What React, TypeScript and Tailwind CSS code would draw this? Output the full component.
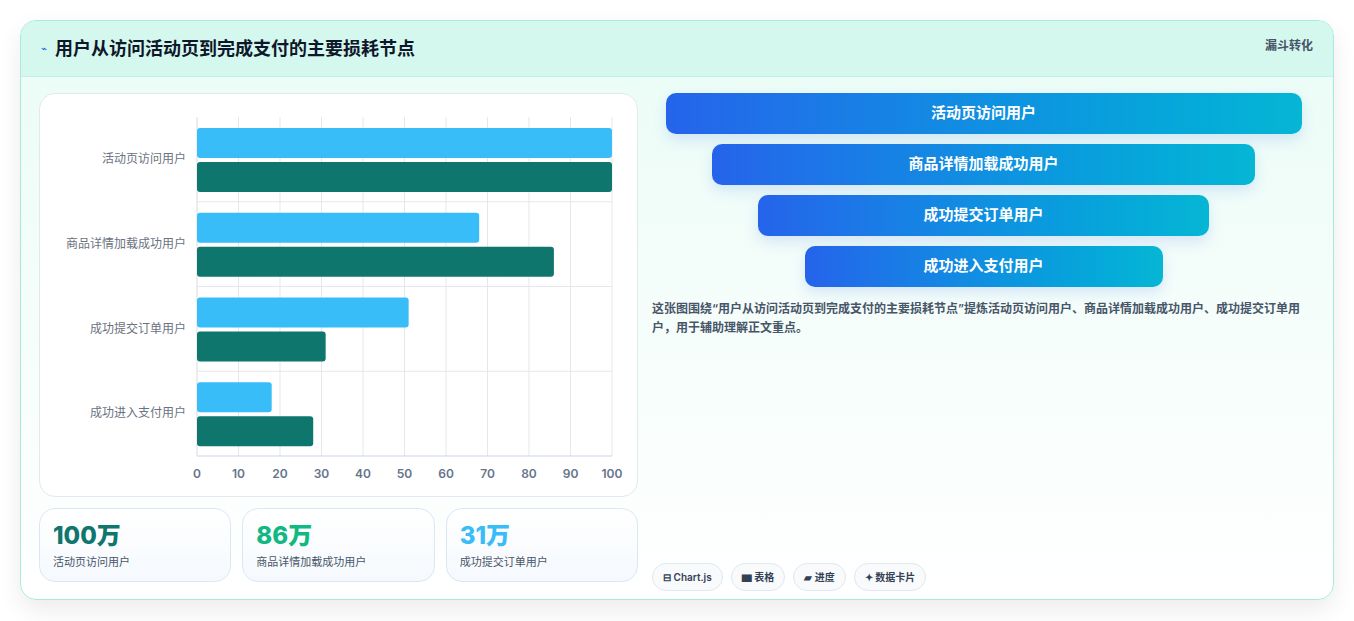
const font = { fontFamily: 'Inter, "Noto Sans CJK SC", sans-serif' }

const cats = [
  { label: '活动页访问用户', a: 100, b: 100 },
  { label: '商品详情加载成功用户', a: 68, b: 86 },
  { label: '成功提交订单用户', a: 51, b: 31 },
  { label: '成功进入支付用户', a: 18, b: 28 },
]

const funnel = ['活动页访问用户', '商品详情加载成功用户', '成功提交订单用户', '成功进入支付用户']
const funnelW = ['w-[636px]', 'w-[543px]', 'w-[451px]', 'w-[358px]']

const stats = [
  { v: '100万', l: '活动页访问用户', c: 'text-[#0f766e]' },
  { v: '86万', l: '商品详情加载成功用户', c: 'text-[#10b981]' },
  { v: '31万', l: '成功提交订单用户', c: 'text-[#38bdf8]' },
]

function Chart() {
  const x0 = 157, w = 415, y0 = 23, band = 84.75
  const sx = (v: number) => (v / 100) * w
  return (
    <svg width="597" height="402" className="block">
      {Array.from({ length: 11 }).map((_, i) => (
        <line key={i} x1={x0 + i * 41.5} x2={x0 + i * 41.5} y1={y0} y2={362} stroke="#e5e7eb" />
      ))}
      {[1, 2, 3].map(i => (
        <line key={i} x1={x0} x2={x0 + w} y1={y0 + i * band} y2={y0 + i * band} stroke="#e5e7eb" />
      ))}
      <line x1={x0} x2={x0 + w} y1={362} y2={362} stroke="#cbd5e1" />
      <line x1={x0} x2={x0} y1={y0} y2={362} stroke="#e5e7eb" />
      {cats.map((c, i) => {
        const t = y0 + i * band
        return (
          <g key={c.label}>
            <rect x={x0} y={t + 11} width={sx(c.a)} height={30} rx={3} fill="#38bdf8" />
            <rect x={x0} y={t + 45} width={sx(c.b)} height={30} rx={3} fill="#0f766e" />
            <text x={146} y={t + 46} textAnchor="end" fontSize="12" fill="#6b7280" style={font}>{c.label}</text>
          </g>
        )
      })}
      {Array.from({ length: 11 }).map((_, i) => (
        <text key={i} x={x0 + i * 41.5} y={384} textAnchor="middle" fontSize="12" fontWeight="600" fill="#64748b" style={font}>{i * 10}</text>
      ))}
    </svg>
  )
}

export default function App() {
  return (
    <div className="w-[1354px] h-[621px] bg-white pt-5 pl-5" style={font}>
      <div className="w-[1314px] h-[580px] rounded-2xl border border-[#a7ebe0] overflow-hidden shadow-[0_10px_25px_rgba(0,0,0,0.08)] bg-gradient-to-b from-[#eafcf6] to-white flex flex-col">
        <div className="h-[56px] shrink-0 bg-[#d5f8ee] border-b border-[#c7efe4] flex items-center justify-between px-5">
          <div className="flex items-center gap-2">
            <span className="text-[10px] text-[#2563eb]">⌁</span>
            <span className="text-[18px] font-bold text-[#0f172a]">用户从访问活动页到完成支付的主要损耗节点</span>
          </div>
          <span className="text-[12px] font-semibold text-[#475569] self-start mt-4">漏斗转化</span>
        </div>
        <div className="flex gap-[14px] px-[18px] pt-4">
          <div className="w-[599px] shrink-0 flex flex-col gap-[11px]">
            <div className="h-[404px] bg-white rounded-2xl border border-[#e2e8f0]">
              <Chart />
            </div>
            <div className="grid grid-cols-3 gap-[11px]">
              {stats.map(s => (
                <div key={s.v} className="h-[74px] rounded-2xl border border-[#dbe7f3] bg-gradient-to-b from-white to-[#f5f9fd] px-[13px] pt-[12px]">
                  <div className={`text-[24px] font-extrabold leading-[30px] ${s.c}`}>{s.v}</div>
                  <div className="text-[11px] text-[#475569] mt-[3px]">{s.l}</div>
                </div>
              ))}
            </div>
          </div>
          <div className="flex-1 flex flex-col">
            <div className="flex flex-col items-center gap-[10px]">
              {funnel.map((f, i) => (
                <div key={f} className={`${funnelW[i]} h-[41px] rounded-[10px] bg-gradient-to-r from-[#2563eb] to-[#06b6d4] flex items-center justify-center text-white text-[15px] font-bold shadow-[0_6px_14px_rgba(37,99,235,0.15)]`}>{f}</div>
              ))}
            </div>
            <p className="mt-[12px] text-[12px] leading-[19px] font-semibold text-[#475569]">
              这张图围绕“用户从访问活动页到完成支付的主要损耗节点”提炼活动页访问用户、商品详情加载成功用户、成功提交订单用户，用于辅助理解正文重点。
            </p>
            <div className="mt-auto mb-[1px] flex gap-2 pt-2" style={{ marginTop: 218 }}>
              {['⊟ Chart.js', '▆ 表格', '▰ 进度', '✦ 数据卡片'].map(c => (
                <span key={c} className="h-[28px] px-[10px] rounded-full border border-[#e2e8f0] bg-[#f8fafc] text-[10px] font-semibold text-[#334155] flex items-center">{c}</span>
              ))}
            </div>
          </div>
        </div>
      </div>
    </div>
  )
}
